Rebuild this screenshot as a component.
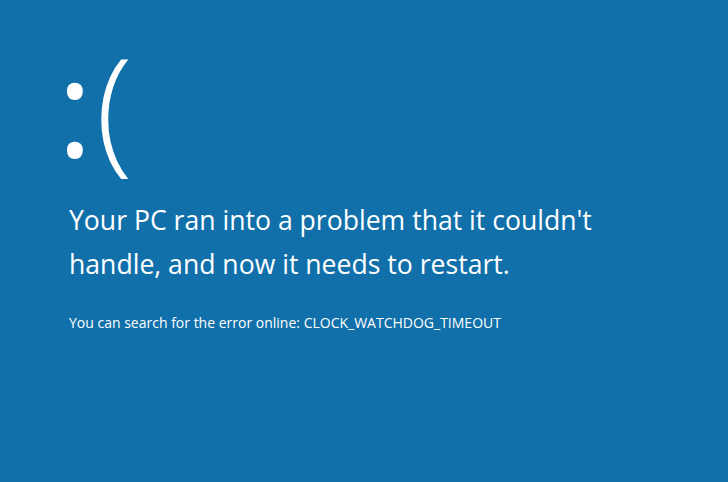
export default function App() {
  return (
    <div className="w-[728px] h-[482px] bg-[#1170aa] text-white overflow-hidden" style={{ fontFamily: '"Open Sans", "Noto Sans", sans-serif' }}>
      <div className="pl-[57px] pt-[37px]">
        <div className="text-[136px] leading-[136px] h-[136px]">
          <span className="font-normal tracking-[3px]">:</span>
          <span className="font-light">(</span>
        </div>
      </div>
      <div className="pl-[69px] pt-[25px]">
        <p className="text-[26.6px] leading-[44px] font-normal">Your PC ran into a problem that it couldn't<br />handle, and now it needs to restart.</p>
        <p className="text-[14px] leading-[20px] mt-[27px]">You can search for the error online: CLOCK_WATCHDOG_TIMEOUT</p>
      </div>
    </div>
  );
}
